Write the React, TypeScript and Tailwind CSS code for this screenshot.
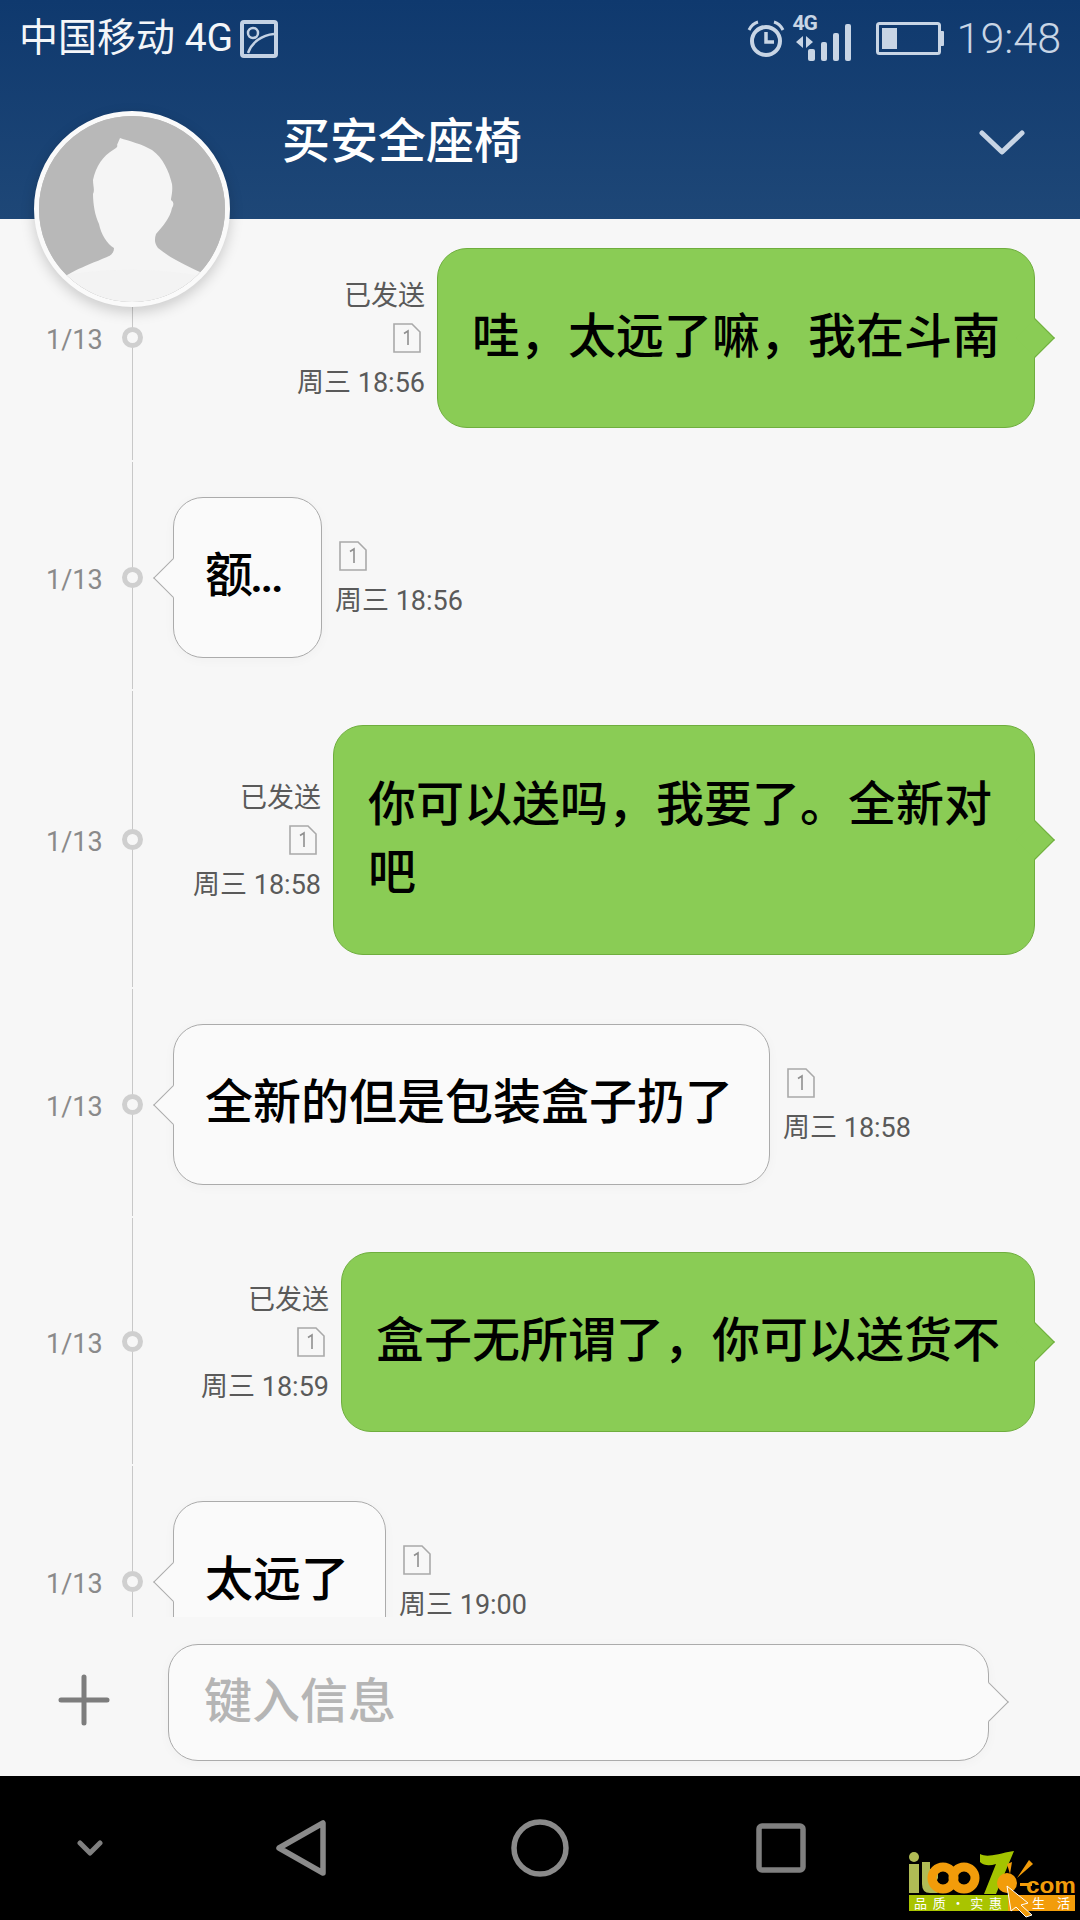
import React from "react";

const Sim = () => (
  <svg width="28" height="30" viewBox="0 0 28 30" fill="none" stroke="#a9a9a9" strokeWidth="1.6">
    <path d="M1 1H19L27 9V29H1Z" />
    <path d="M11 10.5L15 8V22" stroke="#8f8f8f" strokeWidth="1.6" />
  </svg>
);

type RowProps = {
  mine: boolean;
  lines: string[];
  time: string;
  size: string;
};

const Row = ({ mine, lines, time, size }: RowProps) => (
  <div className="flex items-stretch">
    <div className={`w-[118px] pl-[46px] flex items-center text-[27px] leading-none text-[#8a8a8a] ${mine ? "pt-[5px]" : "pt-[8px]"}`}>1/13</div>
    <div className="w-[28px] flex flex-col items-center">
      <div className="flex-1 w-px bg-[#c8c8c8] -mb-[3px]" />
      <div className={`w-[21px] h-[21px] rounded-full border-[5px] border-[#cfcfcf] bg-[#f7f7f7] ${mine ? "translate-y-[2px]" : "translate-y-[3px]"}`} />
      <div className="flex-1 w-px bg-[#c8c8c8] mb-[2px]" />
    </div>
    {mine ? (
      <div className="flex-1 flex items-center justify-end pr-[45px] py-[34px]">
        <div className="flex flex-col items-end mr-[12px] pt-[2px] text-[27px] leading-[36px] text-[#5a5a5a]">
          <div>已发送</div>
          <div className="mt-[9px] mr-[4px] h-[30px]"><Sim /></div>
          <div className="mt-[12px] whitespace-nowrap">{time}</div>
        </div>
        <div className={`relative flex items-center px-[34px] rounded-[30px] bg-[#8acc55] border border-[#6fae3e] text-[48px] leading-[66px] font-medium text-black whitespace-nowrap ${size}`}>
          <div className="absolute -right-[15px] top-1/2 -mt-[14px] w-[28px] h-[28px] rotate-45 bg-[#8acc55] border-t border-r border-[#6fae3e]" />
          <div className="relative flex flex-col gap-[2px] pb-[3px]">
            {lines.map((l) => (
              <div key={l}>{l}</div>
            ))}
          </div>
        </div>
      </div>
    ) : (
      <div className="flex-1 flex items-center pl-[27px] pt-[35px] pb-[33px]">
        <div className={`relative flex items-center pl-[31px] pr-[36px] rounded-[30px] bg-[#fafafa] border border-[#ababab] text-[48px] leading-[66px] font-medium text-black whitespace-nowrap shadow-[0_2px_12px_rgba(0,0,0,0.03)] ${size}`}>
          <div className="absolute -left-[15px] top-1/2 -mt-[14px] w-[28px] h-[28px] rotate-45 bg-[#fafafa] border-l border-b border-[#ababab]" />
          <div className="relative pb-[3px]">{lines[0]}</div>
        </div>
        <div className="flex flex-col items-start ml-[13px] pt-[4px] text-[27px] leading-[36px] text-[#5a5a5a]">
          <div className="ml-[4px] h-[30px]"><Sim /></div>
          <div className="mt-[12px] whitespace-nowrap">{time}</div>
        </div>
      </div>
    )}
  </div>
);

const Avatar = () => (
  <svg viewBox="0 0 186 186" className="w-full h-full">
    <rect width="186" height="186" fill="#b8b8b8" />
    <path
      d="M81 22C90 25 103 28 113 34C124 42 130 55 133 68C134 75 132 82 132 84C135 86 135 89 133 92C131 102 124 110 117 118C115 124 116 128 119 132C132 143 150 151 170 160V186H16V170C24 158 44 151 68 141C73 139 75 136 75 132C68 128 62 118 60 108C56 100 54 88 54 78C56 74 54 70 54 64C57 50 64 40 74 34C78 32 79 30 78 29Z"
      fill="#f5f5f5"
    />
    <path d="M0 186V165C60 150 120 150 186 165V186Z" fill="#f1f1f1" opacity="0.5" />
  </svg>
);

const Logo = () => (
  <svg width="176" height="70" viewBox="0 0 176 70" className="absolute left-[904px] top-[1848px]">
    <circle cx="10" cy="9" r="5" fill="#b0bb55" />
    <rect x="5" y="16" width="10" height="29" fill="#b0bb55" />
    <path d="M18 14H26V21H34V30A14 14 0 0 0 34 45H26Q18 45 18 36Z" fill="#b0bb55" />
    <circle cx="39" cy="30" r="11" fill="none" stroke="#f29c0a" strokeWidth="9" />
    <circle cx="60" cy="30" r="11" fill="none" stroke="#f29c0a" strokeWidth="9" />
    <path d="M76 6C84 10 92 6 110 3L92 46H80L92 16C86 18 80 18 76 14Z" fill="#a4c400" />
    <path d="M103 16L108 14L106 26ZM125 12L129 16L113 30ZM116 35H128V38H116Z" fill="#f29c0a" />
    <circle cx="103" cy="35" r="10" fill="#f29c0a" />
    <text x="122" y="45" fontFamily="Liberation Sans, sans-serif" fontWeight="700" fontSize="22" fill="#f29c0a" textLength="50" lengthAdjust="spacingAndGlyphs">com</text>
    <rect x="5" y="47" width="99" height="16" fill="#a9c400" />
    <rect x="104" y="47" width="67" height="16" fill="#f29c0a" />
    <text x="10" y="60" fontFamily="Noto Sans CJK SC, sans-serif" fontSize="13" fill="#fff" textLength="88">品质·实惠</text>
    <text x="128" y="60" fontFamily="Noto Sans CJK SC, sans-serif" fontSize="13" fill="#fff" textLength="38">生活</text>
    <path d="M103 38L124 55L117 57L128 67L122 69L112 59L107 63Z" fill="#f29c0a" stroke="#fff" strokeWidth="1" />
  </svg>
);

export default function App() {
  return (
    <div className="relative w-[1080px] h-[1920px] overflow-hidden flex flex-col bg-[#f7f7f7] font-['Roboto','Noto_Sans_CJK_SC',sans-serif]">
      <header className="relative z-10 h-[219px] shrink-0 bg-gradient-to-b from-[#0f396e] to-[#1e4777]">
        <div className="h-[77px] flex items-center pl-[19px] pr-[19px]">
          <span className="text-[39px] leading-none text-[#f4f6f9]">中国移动 4G</span>
          <svg width="38" height="38" viewBox="0 0 38 38" className="ml-[7px]" fill="none" stroke="#c4d2e4">
            <rect x="2" y="2" width="34" height="34" rx="2" strokeWidth="4" />
            <circle cx="13" cy="13" r="5" strokeWidth="2.5" />
            <path d="M8 33C12 22 22 15 34 14" strokeWidth="2.5" />
          </svg>
          <div className="ml-auto flex items-center">
            <svg width="38" height="40" viewBox="0 0 38 40" fill="none" stroke="#c8d5e5">
              <circle cx="19" cy="22" r="14" strokeWidth="4" />
              <path d="M19 13V23H27" strokeWidth="3.5" />
              <path d="M2 11C4 7 7 4 11 3M36 11C34 7 31 4 27 3" strokeWidth="3" />
            </svg>
            <div className="relative w-[60px] h-[44px] ml-[8px]">
              <span className="absolute left-0 -top-[4px] text-[21px] leading-[21px] font-bold tracking-[-1px] text-[#c8d5e5]">4G</span>
              <svg width="60" height="44" viewBox="0 0 60 44" fill="#c8d5e5">
                <path d="M3 25L10 19V31ZM13 19L20 25L13 31Z" />
                <rect x="15" y="32" width="7" height="12" rx="2" />
                <rect x="28" y="25" width="6" height="19" rx="2" />
                <rect x="40" y="16" width="6" height="28" rx="2" />
                <rect x="52" y="7" width="6" height="37" rx="2" />
              </svg>
            </div>
            <svg width="68" height="34" viewBox="0 0 68 34" fill="none" className="ml-[23px]">
              <rect x="1.5" y="1.5" width="62" height="30" rx="2" stroke="#c8d5e5" strokeWidth="3" />
              <rect x="6" y="6" width="15" height="21" fill="#c8d5e5" />
              <rect x="64" y="9" width="4" height="15" rx="1" fill="#c8d5e5" />
            </svg>
            <span className="ml-[13px] text-[43px] leading-none font-light text-[#c8d5e5]">19:48</span>
          </div>
        </div>
        <div className="h-[130px] flex items-center pl-[282px] pr-[55px]">
          <span className="text-[48px] leading-none font-medium text-white">买安全座椅</span>
          <svg width="46" height="25" viewBox="0 0 46 25" fill="none" stroke="#c8d5e5" strokeWidth="5" strokeLinecap="round" strokeLinejoin="round" className="ml-auto">
            <path d="M3 3L23 22L43 3" />
          </svg>
        </div>
        <div className="absolute left-[34px] top-[111px] w-[196px] h-[196px] rounded-full border-[5px] border-[#fafafa] overflow-hidden bg-[#b8b8b8] shadow-[0_5px_14px_rgba(0,0,0,0.18)]">
          <Avatar />
        </div>
      </header>

      <main className="flex-1 min-h-0 overflow-hidden">
        <div className="-mt-[5px]">
          <Row mine lines={["哇，太远了嘛，我在斗南"]} time="周三 18:56" size="h-[180px]" />
          <Row mine={false} lines={["额..."]} time="周三 18:56" size="h-[161px] w-[149px] tracking-[-3px]" />
          <Row mine lines={["你可以送吗，我要了。全新对", "吧"]} time="周三 18:58" size="h-[230px] w-[702px]" />
          <Row mine={false} lines={["全新的但是包装盒子扔了"]} time="周三 18:58" size="h-[161px]" />
          <Row mine lines={["盒子无所谓了，你可以送货不"]} time="周三 18:59" size="h-[180px]" />
          <Row mine={false} lines={["太远了"]} time="周三 19:00" size="h-[161px]" />
        </div>
      </main>

      <div className="h-[159px] shrink-0 flex items-center pl-[58px] pt-[6px] bg-[#f7f7f7]">
        <svg width="52" height="52" viewBox="0 0 52 52" stroke="#7d7d7d" strokeWidth="5" strokeLinecap="round">
          <path d="M26 3V49M3 26H49" />
        </svg>
        <div className="relative ml-[58px] mt-[5px] w-[821px] h-[117px] flex items-center pl-[35px] rounded-[30px] bg-[#fafafa] border border-[#ababab] text-[48px] leading-none font-medium text-[#b5b5b5] shadow-[0_2px_12px_rgba(0,0,0,0.03)]">
          <div className="absolute -right-[15px] top-1/2 -mt-[14px] w-[28px] h-[28px] rotate-45 bg-[#fafafa] border-t border-r border-[#ababab]" />
          <span className="relative">键入信息</span>
        </div>
      </div>

      <nav className="h-[144px] shrink-0 bg-black flex items-center pl-[77px]">
        <svg width="26" height="16" viewBox="0 0 26 16" fill="none" stroke="#808080" strokeWidth="5" strokeLinecap="round" strokeLinejoin="round">
          <path d="M3 3L13 13L23 3" />
        </svg>
        <svg width="50" height="56" viewBox="0 0 50 56" fill="none" stroke="#8a8a8a" strokeWidth="5.5" strokeLinejoin="round" className="ml-[173px]">
          <path d="M3 28L47 3V53Z" />
        </svg>
        <svg width="58" height="58" viewBox="0 0 58 58" fill="none" stroke="#8a8a8a" strokeWidth="5.5" className="ml-[185px]">
          <circle cx="29" cy="29" r="26" />
        </svg>
        <svg width="50" height="50" viewBox="0 0 50 50" fill="none" stroke="#808080" strokeWidth="5.5" className="ml-[187px]">
          <rect x="3" y="3" width="44" height="44" rx="3" />
        </svg>
      </nav>
      <Logo />
    </div>
  );
}
